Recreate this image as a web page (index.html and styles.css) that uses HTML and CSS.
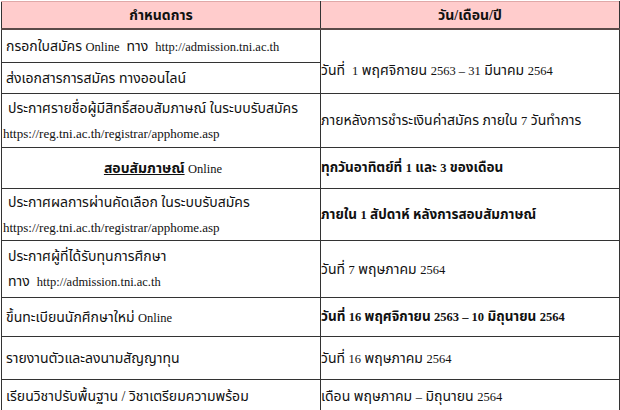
FILE: index.html
```html
<!DOCTYPE html>
<html lang="th">
<head>
<meta charset="utf-8">
<title>กำหนดการ</title>
<link rel="stylesheet" href="styles.css">
</head>
<body>
<table class="sched">
  <colgroup><col class="c-left"><col class="c-right"></colgroup>
  <thead>
    <tr class="r-head"><th>กำหนดการ</th><th>วัน/เดือน/ปี</th></tr>
  </thead>
  <tbody>
    <tr class="r1">
      <td class="l">กรอกใบสมัคร <span class="en">Online</span>&nbsp; ทาง&nbsp; <span class="en">http://admission.tni.ac.th</span></td>
      <td class="r low" rowspan="2">วันที่&nbsp; <span class="en">1</span> พฤศจิกายน <span class="en">2563 – 31</span> มีนาคม <span class="en">2564</span></td>
    </tr>
    <tr class="r2"><td class="l">ส่งเอกสารการสมัคร ทางออนไลน์</td></tr>
    <tr class="r3">
      <td class="l two"><span class="ind">ประกาศรายชื่อผู้มีสิทธิ์สอบสัมภาษณ์ ในระบบรับสมัคร</span><br><span class="url">https://reg.tni.ac.th/registrar/apphome.asp</span></td>
      <td class="r">ภายหลังการชำระเงินค่าสมัคร ภายใน <span class="en">7</span> วันทำการ</td>
    </tr>
    <tr class="r4">
      <td class="l center"><b class="ul">สอบสัมภาษณ์</b> <span class="en">Online</span></td>
      <td class="r bold">ทุกวันอาทิตย์ที่ <span class="en">1</span> และ <span class="en">3</span> ของเดือน</td>
    </tr>
    <tr class="r5">
      <td class="l two"><span class="ind">ประกาศผลการผ่านคัดเลือก ในระบบรับสมัคร</span><br><span class="url">https://reg.tni.ac.th/registrar/apphome.asp</span></td>
      <td class="r bold">ภายใน <span class="en">1</span> สัปดาห์ หลังการสอบสัมภาษณ์</td>
    </tr>
    <tr class="r6">
      <td class="l two"><span class="ind">ประกาศผู้ที่ได้รับทุนการศึกษา</span><br><span class="ind">ทาง&nbsp; <span class="en">http://admission.tni.ac.th</span></span></td>
      <td class="r">วันที่ <span class="en">7</span> พฤษภาคม <span class="en">2564</span></td>
    </tr>
    <tr class="r7">
      <td class="l">ขึ้นทะเบียนนักศึกษาใหม่ <span class="en">Online</span></td>
      <td class="r bold">วันที่ <span class="en">16</span> พฤศจิกายน <span class="en">2563 – 10</span> มิถุนายน <span class="en">2564</span></td>
    </tr>
    <tr class="r8">
      <td class="l">รายงานตัวและลงนามสัญญาทุน</td>
      <td class="r">วันที่ <span class="en">16</span> พฤษภาคม <span class="en">2564</span></td>
    </tr>
    <tr class="r9">
      <td class="l">เรียนวิชาปรับพื้นฐาน / วิชาเตรียมความพร้อม</td>
      <td class="r">เดือน พฤษภาคม <span class="en">–</span> มิถุนายน <span class="en">2564</span></td>
    </tr>
  </tbody>
</table>
</body>
</html>
```

FILE: styles.css
```css
html, body {
  margin: 0;
  padding: 0;
  background: #ffffff;
}
body {
  padding: 1px 0 0 1px;
  font-family: "Liberation Serif", "Noto Sans Thai", "Noto Serif Thai", serif;
  font-size: 14px;
  color: #111;
}
.sched {
  width: 618px;
  border-collapse: collapse;
  table-layout: fixed;
}
.c-left { width: 319px; }
.c-right { width: 299px; }
.sched th, .sched td {
  border: 1px solid #333;
  padding: 0;
  vertical-align: middle;
  white-space: nowrap;
  overflow: hidden;
}
.sched th {
  background: #ffcccc;
  font-weight: bold;
  text-align: center;
  height: 26px;
  border-top-color: #e0a8a8;
  border-bottom: 2px solid #5a4a48;
  font-size: 14px;
}
.l { padding-left: 4px !important; }
.r { padding-left: 0; }
.low { vertical-align: bottom !important; padding-bottom: 12px !important; }
.two { line-height: 25px; }
.ind { padding-left: 2px; }
.url { margin-left: -3px; font-size: 13px; }
.en { font-size: 12.5px; }
.center { text-align: center; }
.bold { font-weight: bold; font-size: 13.5px; }
.ul { text-decoration: underline; }
.r1 td { height: 32px; }
.r2 td { height: 30px; }
.r3 td { height: 53px; }
.r4 td { height: 40px; }
.r5 td { height: 51px; }
.r6 td { height: 56px; }
.r7 td { height: 38px; }
.r8 td { height: 42px; }
.r9 td { height: 32px; }
```
